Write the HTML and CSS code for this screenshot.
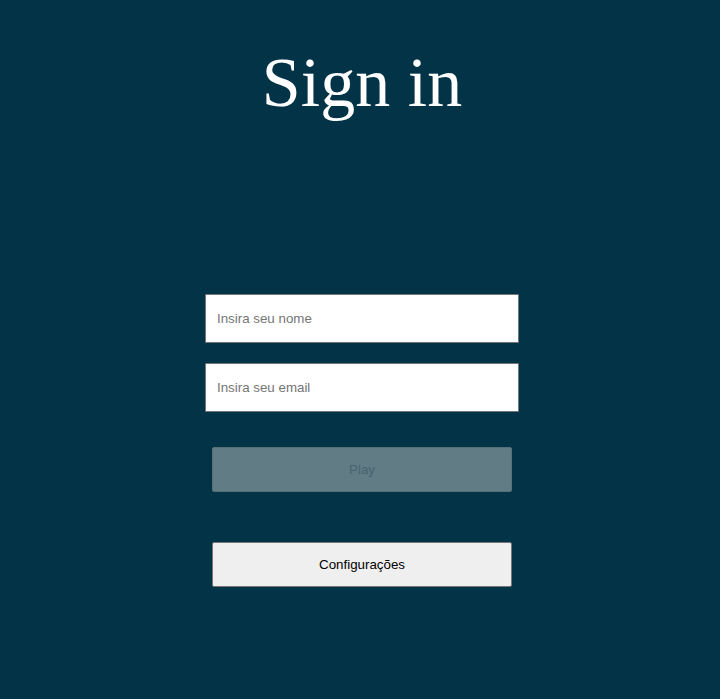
FILE: index.html
```html
<!DOCTYPE html>
<html lang="pt">
<head>
<meta charset="utf-8">
<title>Sign in</title>
<link rel="stylesheet" href="styles.css">
</head>
<body>
<main class="page">
  <h1 class="title">Sign in</h1>
  <form class="form">
    <input class="field" type="text" placeholder="Insira seu nome">
    <input class="field" type="email" placeholder="Insira seu email">
    <button class="btn btn-play" type="button" disabled>Play</button>
    <button class="btn btn-config" type="button">Configurações</button>
  </form>
</main>
</body>
</html>
```
FILE: styles.css
```css
html, body {
  margin: 0;
  padding: 0;
}
body {
  background: #023347;
  width: 720px;
  height: 699px;
  overflow: hidden;
}
.page {
  display: flex;
  flex-direction: column;
  align-items: center;
  padding-left: 4px;
}
.title {
  margin: 43px 0 0;
  font-family: "Liberation Serif", "Times New Roman", serif;
  font-weight: 400;
  font-size: 70px;
  line-height: 80px;
  color: #ffffff;
}
.form {
  display: flex;
  flex-direction: column;
  align-items: center;
  margin-top: 171px;
}
.field {
  box-sizing: border-box;
  width: 314px;
  height: 49px;
  margin: 0 0 20px;
  padding: 0 11px;
  border: 1px solid #767676;
  border-radius: 1px;
  background: #ffffff;
  font-family: "Liberation Sans", Arial, sans-serif;
  font-size: 13.333px;
  color: #000;
  outline: none;
}
.field::placeholder {
  color: #757575;
}
.btn {
  box-sizing: border-box;
  width: 300px;
  height: 45px;
  border-radius: 2px;
  font-family: "Liberation Sans", Arial, sans-serif;
  font-size: 13.333px;
  padding: 0;
}
.btn-play {
  margin-top: 15px;
  background: #627c86;
  border: 1px solid #56707a;
  color: #48636d;
}
.btn-config {
  margin-top: 50px;
  background: #efefef;
  border: 1px solid #767676;
  color: #000000;
}
```
